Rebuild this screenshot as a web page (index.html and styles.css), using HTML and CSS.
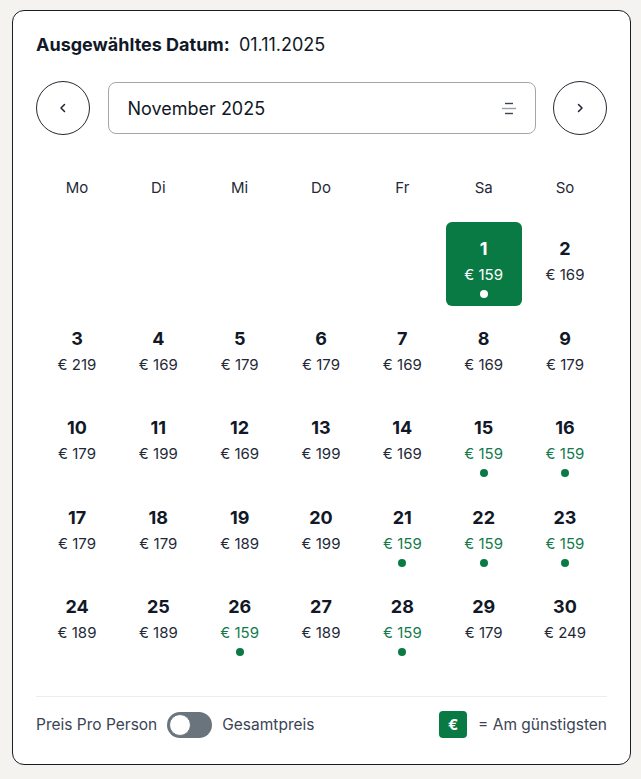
FILE: index.html
```html
<!DOCTYPE html>
<html lang="de">
<head>
  <meta charset="UTF-8">
  <meta name="viewport" content="width=device-width, initial-scale=1.0">
  <title>Datum wählen</title>
  <link rel="stylesheet" href="styles.css">
</head>
<body>
  <div class="card">
    <div class="selected">
      <strong>Ausgewähltes Datum:</strong>
      <span>01.11.2025</span>
    </div>

    <div class="nav">
      <button class="round-btn" aria-label="Vorheriger Monat">
        <svg width="12" height="12" viewBox="0 0 12 12"><path d="M7.5 2.5 L4 6 L7.5 9.5" fill="none" stroke="#1f2430" stroke-width="1.5" stroke-linecap="round" stroke-linejoin="round"/></svg>
      </button>
      <div class="month-select">
        <span>November 2025</span>
        <svg width="16" height="16" viewBox="0 0 16 16">
          <line x1="4" y1="3.5" x2="12" y2="3.5" stroke="#3b4350" stroke-width="1.4"/>
          <line x1="1" y1="8.5" x2="15" y2="8.5" stroke="#9aa0a6" stroke-width="1.4"/>
          <line x1="4" y1="13.5" x2="12" y2="13.5" stroke="#3b4350" stroke-width="1.4"/>
        </svg>
      </div>
      <button class="round-btn" aria-label="Nächster Monat">
        <svg width="12" height="12" viewBox="0 0 12 12"><path d="M4.5 2.5 L8 6 L4.5 9.5" fill="none" stroke="#1f2430" stroke-width="1.5" stroke-linecap="round" stroke-linejoin="round"/></svg>
      </button>
    </div>

    <div class="weekdays">
      <span>Mo</span><span>Di</span><span>Mi</span><span>Do</span><span>Fr</span><span>Sa</span><span>So</span>
    </div>

    <div class="days" id="days"></div>

    <div class="footer">
      <div class="toggle-group">
        <span>Preis Pro Person</span>
        <span class="switch"><span class="knob"></span></span>
        <span>Gesamtpreis</span>
      </div>
      <div class="legend">
        <span class="legend-box">€</span>
        <span>= Am günstigsten</span>
      </div>
    </div>
  </div>

  <script>
    const prices = [159, 169, 219, 169, 179, 179, 169, 169, 179, 179, 199, 169, 199, 169, 159, 159,
      179, 179, 189, 199, 159, 159, 159, 189, 189, 159, 189, 159, 179, 249];
    const cheapest = Math.min(...prices);
    const selectedDay = 1;
    const offset = 5; // 1. November 2025 ist ein Samstag

    const daysEl = document.getElementById('days');

    for (let i = 0; i < offset; i++) {
      daysEl.appendChild(document.createElement('div'));
    }

    prices.forEach((price, index) => {
      const day = index + 1;
      const cell = document.createElement('div');
      cell.classList.add('day');
      if (price === cheapest) cell.classList.add('cheap');
      if (day === selectedDay) cell.classList.add('active');

      cell.innerHTML = `
        <span class="num">${day}</span>
        <span class="price">€ ${price}</span>
        ${price === cheapest ? '<span class="dot"></span>' : ''}
      `;
      daysEl.appendChild(cell);
    });
  </script>
</body>
</html>
```

FILE: styles.css
```css
body {
  margin: 0;
  background-color: #f5f3ef;
  font-family: Inter, "Noto Sans", Arial, sans-serif;
  color: #111827;
}

.card {
  box-sizing: border-box;
  width: 619px;
  margin: 10px 0 0 12px;
  padding: 23px 23px 26px;
  background-color: #fff;
  border: 1px solid #1d1d24;
  border-radius: 12px;
}

.selected {
  font-size: 18px;
  line-height: 22px;
}

.selected strong {
  font-weight: 700;
  margin-right: 4px;
}

.nav {
  display: flex;
  align-items: center;
  gap: 17.5px;
  margin-top: 25px;
}

.round-btn {
  flex: none;
  width: 54px;
  height: 54px;
  border-radius: 50%;
  border: 1px solid #262833;
  background: #fff;
  display: flex;
  align-items: center;
  justify-content: center;
  padding: 0;
}

.month-select {
  flex: 1;
  height: 52px;
  box-sizing: border-box;
  border: 1px solid #a3a7ab;
  border-radius: 8px;
  display: flex;
  align-items: center;
  justify-content: space-between;
  padding: 0 18px 0 19px;
  font-size: 18px;
  color: #111827;
}

.weekdays,
.days {
  display: grid;
  grid-template-columns: repeat(7, 1fr);
  gap: 5.5px 5.33px;
  padding: 0 4px 0 3px;
}

.weekdays {
  margin-top: 43px;
  font-size: 15px;
  line-height: 20px;
  color: #1f2937;
  text-align: center;
}

.days {
  grid-auto-rows: 84px;
  margin-top: 24px;
}

.day {
  display: flex;
  flex-direction: column;
  align-items: center;
  padding-top: 16px;
  border-radius: 6px;
  box-sizing: border-box;
}

.num {
  font-size: 18px;
  line-height: 22px;
  font-weight: 700;
  color: #111827;
}

.price {
  margin-top: 6px;
  font-size: 15px;
  line-height: 18px;
  color: #1f2937;
}

.dot {
  margin-top: 6px;
  width: 8px;
  height: 8px;
  border-radius: 50%;
  background-color: #0a7a45;
}

.cheap .price {
  color: #137a4b;
}

.day.active {
  background-color: #0a7a45;
}

.day.active .num,
.day.active .price {
  color: #fff;
}

.day.active .dot {
  background-color: #fff;
}

.footer {
  display: flex;
  align-items: center;
  justify-content: space-between;
  margin-top: 32px;
  padding-top: 14px;
  border-top: 1px solid #f1ede6;
  font-size: 15.5px;
  color: #3b4454;
}

.toggle-group,
.legend {
  display: flex;
  align-items: center;
  height: 27px;
}

.toggle-group {
  gap: 10px;
}

.switch {
  position: relative;
  width: 45px;
  height: 26px;
  border-radius: 13px;
  background-color: #6a747c;
}

.knob {
  position: absolute;
  left: 2px;
  top: 2px;
  width: 20px;
  height: 20px;
  border-radius: 50%;
  background-color: #fff;
  border: 1px solid #6a747c;
}

.legend {
  gap: 11px;
}

.legend-box {
  width: 28px;
  height: 27px;
  border-radius: 4px;
  background-color: #0a7a45;
  color: #fff;
  font-weight: 700;
  font-size: 15px;
  display: flex;
  align-items: center;
  justify-content: center;
}
```
